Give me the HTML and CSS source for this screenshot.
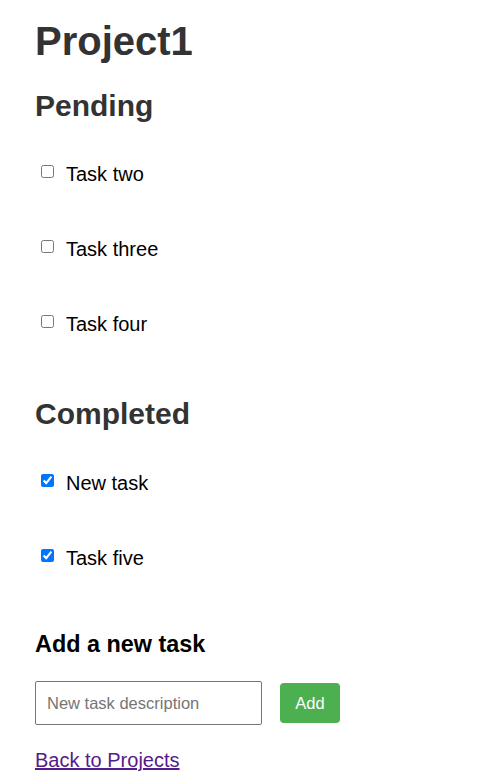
FILE: index.html
```html
<!DOCTYPE html>
<html lang="en">
<head>
<meta charset="utf-8">
<title>Project1</title>
<link rel="stylesheet" href="styles.css">
</head>
<body>
<main class="page">
  <h1 class="title">Project1</h1>
  <h2 class="section-title">Pending</h2>
  <ul class="tasks">
    <li class="task"><input type="checkbox" class="task-check"><span>Task two</span></li>
    <li class="task"><input type="checkbox" class="task-check"><span>Task three</span></li>
    <li class="task"><input type="checkbox" class="task-check"><span>Task four</span></li>
  </ul>
  <h2 class="section-title section-title--after">Completed</h2>
  <ul class="tasks tasks--done">
    <li class="task"><input type="checkbox" class="task-check" checked><span>New task</span></li>
    <li class="task"><input type="checkbox" class="task-check" checked><span>Task five</span></li>
  </ul>
  <h3 class="add-title">Add a new task</h3>
  <form class="add-form">
    <input type="text" class="add-input" placeholder="New task description">
    <button type="button" class="add-button">Add</button>
  </form>
  <a href="#" class="back-link">Back to Projects</a>
</main>
</body>
</html>
```
FILE: styles.css
```css
html, body {
  margin: 0;
  padding: 0;
  background: #fff;
}
body {
  font-family: "Liberation Sans", Arial, sans-serif;
  font-size: 20px;
  color: #000;
}
.page {
  display: flex;
  flex-direction: column;
  align-items: flex-start;
  padding: 17px 35px 0 35px;
}
.title {
  margin: 0;
  font-size: 40px;
  line-height: 48px;
  font-weight: bold;
  color: #333;
}
.section-title {
  margin: 23px 0 0 0;
  font-size: 30px;
  line-height: 36px;
  font-weight: bold;
  color: #333;
}
.section-title--after {
  margin-top: 60px;
}
.tasks {
  list-style: none;
  margin: 38px 0 0 0;
  padding: 0;
  display: flex;
  flex-direction: column;
  gap: 51px;
}
.tasks--done {
  margin-top: 39px;
}
.task {
  display: flex;
  align-items: flex-start;
  line-height: 24px;
}
.task-check {
  width: 13px;
  height: 13px;
  margin: 3px 12px 0 6px;
}
.add-title {
  margin: 60px 0 0 0;
  font-size: 23.4px;
  line-height: 28px;
  font-weight: bold;
  color: #000;
}
.add-form {
  margin: 23px 0 0 0;
  display: flex;
  align-items: center;
  gap: 18px;
}
.add-input {
  box-sizing: border-box;
  width: 227px;
  height: 44px;
  padding: 0 11px;
  border: 1px solid #767676;
  border-radius: 2px;
  font-family: "Liberation Sans", Arial, sans-serif;
  font-size: 16.5px;
  color: #000;
}
.add-input::placeholder {
  color: #757575;
}
.add-button {
  box-sizing: border-box;
  width: 60px;
  height: 40px;
  border: none;
  border-radius: 4px;
  background: #4caf50;
  color: #fff;
  font-family: "Liberation Sans", Arial, sans-serif;
  font-size: 16.5px;
  padding: 0;
}
.back-link {
  margin-top: 23px;
  line-height: 24px;
  color: #551a8b;
  text-decoration: underline;
}
```
